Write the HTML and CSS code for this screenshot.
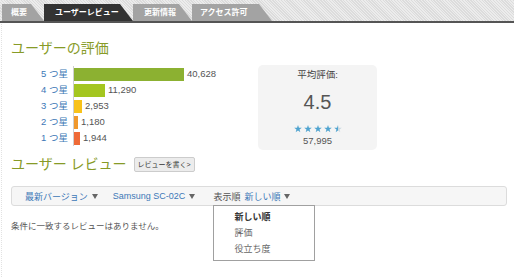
FILE: index.html
```html
<!DOCTYPE html>
<html lang="ja">
<head>
<meta charset="utf-8">
<title>ユーザー レビュー</title>
<link rel="stylesheet" href="styles.css">
</head>
<body>
<div class="page">
  <nav class="tabs">
    <a class="tab tab-overview">概要</a>
    <a class="tab tab-reviews active">ユーザーレビュー</a>
    <a class="tab tab-updates">更新情報</a>
    <a class="tab tab-perms">アクセス許可</a>
  </nav>
  <main class="content">
    <h2 class="heading first">ユーザーの評価</h2>
    <section class="ratings">
      <div class="chart">
        <div class="row"><span class="label">5 つ星</span><span class="cell"><span class="bar b5" style="width:110px"></span><span class="val">40,628</span></span></div>
        <div class="row"><span class="label">4 つ星</span><span class="cell"><span class="bar b4" style="width:31px"></span><span class="val">11,290</span></span></div>
        <div class="row"><span class="label">3 つ星</span><span class="cell"><span class="bar b3" style="width:8px"></span><span class="val">2,953</span></span></div>
        <div class="row"><span class="label">2 つ星</span><span class="cell"><span class="bar b2" style="width:4px"></span><span class="val">1,180</span></span></div>
        <div class="row"><span class="label">1 つ星</span><span class="cell"><span class="bar b1" style="width:6px"></span><span class="val">1,944</span></span></div>
      </div>
      <div class="avg">
        <div class="avg-label">平均評価:</div>
        <div class="avg-value">4.5</div>
        <svg class="stars" width="48" height="8" viewBox="0 0 48 8">
          <defs>
            <polygon id="star" points="4,0 4.94,2.71 7.8,2.76 5.52,4.49 6.35,7.24 4,5.6 1.65,7.24 2.48,4.49 0.2,2.76 3.06,2.71"/>
            <linearGradient id="half" x1="0" x2="1" y1="0" y2="0">
              <stop offset="0.5" stop-color="#4fa3cf"/>
              <stop offset="0.5" stop-color="#c9d7df"/>
            </linearGradient>
          </defs>
          <use href="#star" x="0" fill="#4fa3cf"/>
          <use href="#star" x="10" fill="#4fa3cf"/>
          <use href="#star" x="20" fill="#4fa3cf"/>
          <use href="#star" x="30" fill="#4fa3cf"/>
          <use href="#star" x="40" fill="url(#half)"/>
        </svg>
        <div class="avg-count">57,995</div>
      </div>
    </section>
    <div class="review-head">
      <h2 class="heading">ユーザー レビュー</h2>
      <button class="write">レビューを書く&gt;</button>
    </div>
    <div class="filters">
      <span class="filter f-version"><a class="link">最新バージョン</a><svg class="arrow" width="6" height="5" viewBox="0 0 6 5"><polygon points="0,0 6,0 3,5" fill="#666"/></svg></span>
      <span class="filter f-device"><a class="link">Samsung SC-02C</a><svg class="arrow" width="6" height="5" viewBox="0 0 6 5"><polygon points="0,0 6,0 3,5" fill="#666"/></svg></span>
      <span class="filter sort"><span class="muted">表示順</span><a class="link">新しい順</a><svg class="arrow" width="6" height="5" viewBox="0 0 6 5"><polygon points="0,0 6,0 3,5" fill="#666"/></svg>
        <ul class="menu">
          <li class="selected">新しい順</li>
          <li>評価</li>
          <li>役立ち度</li>
        </ul>
      </span>
    </div>
    <p class="empty">条件に一致するレビューはありません。</p>
  </main>
</div>
</body>
</html>
```
FILE: styles.css
```css
* { box-sizing: border-box; }
html, body { margin: 0; padding: 0; background: #fff; }
body {
  font-family: "Liberation Sans", "Noto Sans CJK JP", sans-serif;
  color: #555;
  width: 514px;
  height: 277px;
  overflow: hidden;
}
.page {
  height: 277px;
  margin-left: 1px;
  border-left: 1px dotted #e2e2e2;
}
.tabs {
  display: flex;
  align-items: flex-end;
  height: 23px;
  padding-left: 2px;
  margin-left: -2px;
  border-bottom: 2px solid #555;
  background: repeating-linear-gradient(45deg, #ececec 0 1px, #dcdcdc 1px 2px);
}
.tab {
  display: block;
  height: 17px;
  line-height: 17px;
  padding-left: 9px;
  font-size: 8px;
  font-weight: bold;
  color: #fff;
  background: #a3a3a3;
  clip-path: polygon(0 0, calc(100% - 13px) 0, 100% 100%, 0 100%);
  white-space: nowrap;
}
.tab.active { background: #333; }
.tab-overview { width: 42px; }
.tab-reviews { width: 89px; padding-left: 11px; }
.tab-updates { width: 59px; padding-left: 11px; }
.tab-perms { width: 80px; padding-left: 8px; }

.content { padding: 0 7px 0 9px; }
.heading {
  margin: 0;
  font-size: 14px;
  line-height: 18px;
  font-weight: normal;
  color: #879b27;
  white-space: nowrap;
}
.heading.first { margin-top: 16px; margin-bottom: 8px; }

.ratings { display: flex; height: 85px; }
.chart { width: 247px; padding-top: 1px; }
.row { display: flex; height: 16px; line-height: 16px; }
.label {
  width: 62px;
  padding-right: 5px;
  text-align: right;
  font-size: 9.5px;
  color: #3d78b6;
  white-space: nowrap;
}
.cell {
  display: flex;
  align-items: center;
  border-left: 1px solid #cfcfcf;
}
.bar { display: block; height: 13px; }
.b5 { background: #8cb131; }
.b4 { background: #a4c61f; }
.b3 { background: #f8c21a; }
.b2 { background: #f0982c; }
.b1 { background: #ef6a37; }
.val { margin-left: 3px; font-size: 9.5px; color: #555; }

.avg {
  width: 119px;
  height: 85px;
  background: #f4f4f4;
  border-radius: 5px;
  text-align: center;
  padding-top: 4px;
}
.avg-label { font-size: 9.5px; line-height: 12px; color: #444; }
.avg-value { margin-top: 9px; font-size: 20px; line-height: 24px; color: #555; }
.stars { display: block; margin: 11px auto 0; }
.avg-count { margin-top: 2px; font-size: 9.5px; line-height: 12px; color: #555; }

.review-head {
  display: flex;
  align-items: center;
  height: 18px;
  margin-top: 5px;
}
.write {
  margin-left: 7px;
  height: 15px;
  padding: 0 3px;
  font-family: inherit;
  font-size: 7px;
  color: #333;
  background: #ececec;
  border: 1px solid #ccc;
  border-radius: 2px;
}

.filters {
  position: relative;
  display: flex;
  align-items: center;
  height: 20px;
  margin-top: 13px;
  padding-left: 13px;
  background: #f6f6f6;
  border: 1px solid #dcdcdc;
  border-radius: 3px;
  font-size: 9px;
}
.filter {
  display: flex;
  align-items: center;
  height: 18px;
  white-space: nowrap;
}
.f-version { margin-right: 15px; }
.f-device { margin-right: 18px; }
.link { color: #3d78b6; }
.muted { color: #555; margin-right: 4px; }
.arrow { margin-left: 4px; }
.sort { position: relative; }
.menu {
  position: absolute;
  top: 100%;
  left: 0;
  width: 102px;
  margin: 0;
  padding: 3px 0 3px 20px;
  list-style: none;
  background: #fff;
  border: 1px solid #a0a0a0;
  z-index: 2;
}
.menu li { font-size: 9px; line-height: 16px; color: #666; }
.menu li.selected { color: #333; font-weight: bold; }

.empty {
  margin: 14px 0 0;
  font-size: 8.5px;
  line-height: 12px;
  color: #555;
}
```
